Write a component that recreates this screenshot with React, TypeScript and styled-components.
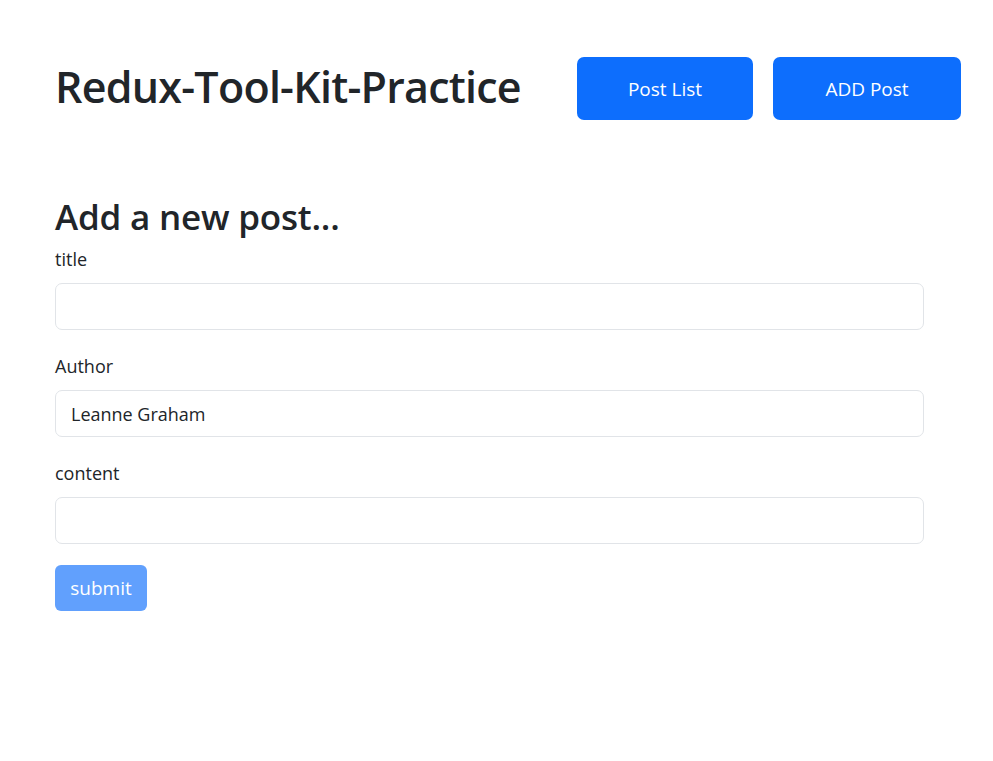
import React from "react";
import styled, { createGlobalStyle } from "styled-components";

const Global = createGlobalStyle`
  * { box-sizing: border-box; }
  body {
    margin: 0;
    background: #fff;
    color: #212529;
    font-family: "Open Sans", "Noto Sans", sans-serif;
  }
`;

const Page = styled.div`
  padding: 57px 32px 0 55px;
`;

const Header = styled.header`
  display: flex;
  align-items: center;
  justify-content: space-between;
  height: 63px;
`;

const Title = styled.h1`
  margin: 0 0 5px;
  font-size: 43px;
  font-weight: 600;
  letter-spacing: -0.75px;
  color: #212529;
`;

const Nav = styled.nav`
  display: flex;
  gap: 20px;
`;

const NavButton = styled.button<{ $w: number }>`
  width: ${(p) => p.$w}px;
  height: 63px;
  border: none;
  border-radius: 7px;
  background: #0d6efd;
  color: #fff;
  font-family: inherit;
  font-size: 19px;
  cursor: pointer;
`;

const Form = styled.form`
  margin-top: 75px;
  width: 869px;
  display: flex;
  flex-direction: column;
`;

const FormTitle = styled.h2`
  margin: 0 0 6px;
  font-size: 35px;
  font-weight: 600;
  letter-spacing: -0.2px;
  line-height: 44px;
  color: #212529;
`;

const Field = styled.div`
  display: flex;
  flex-direction: column;
  margin-bottom: 22px;
`;

const Label = styled.label`
  font-size: 18px;
  line-height: 28px;
  margin-bottom: 10px;
  color: #212529;
`;

const Input = styled.input`
  height: 47px;
  border: 1px solid #e1e4e8;
  border-radius: 7px;
  padding: 0 15px;
  font-family: inherit;
  font-size: 18px;
  color: #212529;
  outline: none;
`;

const Submit = styled.button`
  align-self: flex-start;
  margin-top: -1px;
  width: 92px;
  height: 46px;
  border: none;
  border-radius: 6px;
  background: #0d6efd;
  opacity: 0.65;
  color: #fff;
  font-family: inherit;
  font-size: 19px;
`;

export default function App() {
  return (
    <>
      <Global />
      <Page>
        <Header>
          <Title>Redux-Tool-Kit-Practice</Title>
          <Nav>
            <NavButton $w={176}>Post List</NavButton>
            <NavButton $w={188}>ADD Post</NavButton>
          </Nav>
        </Header>
        <Form onSubmit={(e) => e.preventDefault()}>
          <FormTitle>Add a new post...</FormTitle>
          <Field>
            <Label htmlFor="title">title</Label>
            <Input id="title" />
          </Field>
          <Field>
            <Label htmlFor="author">Author</Label>
            <Input id="author" defaultValue="Leanne Graham" />
          </Field>
          <Field>
            <Label htmlFor="content">content</Label>
            <Input id="content" />
          </Field>
          <Submit type="submit" disabled>
            submit
          </Submit>
        </Form>
      </Page>
    </>
  );
}
